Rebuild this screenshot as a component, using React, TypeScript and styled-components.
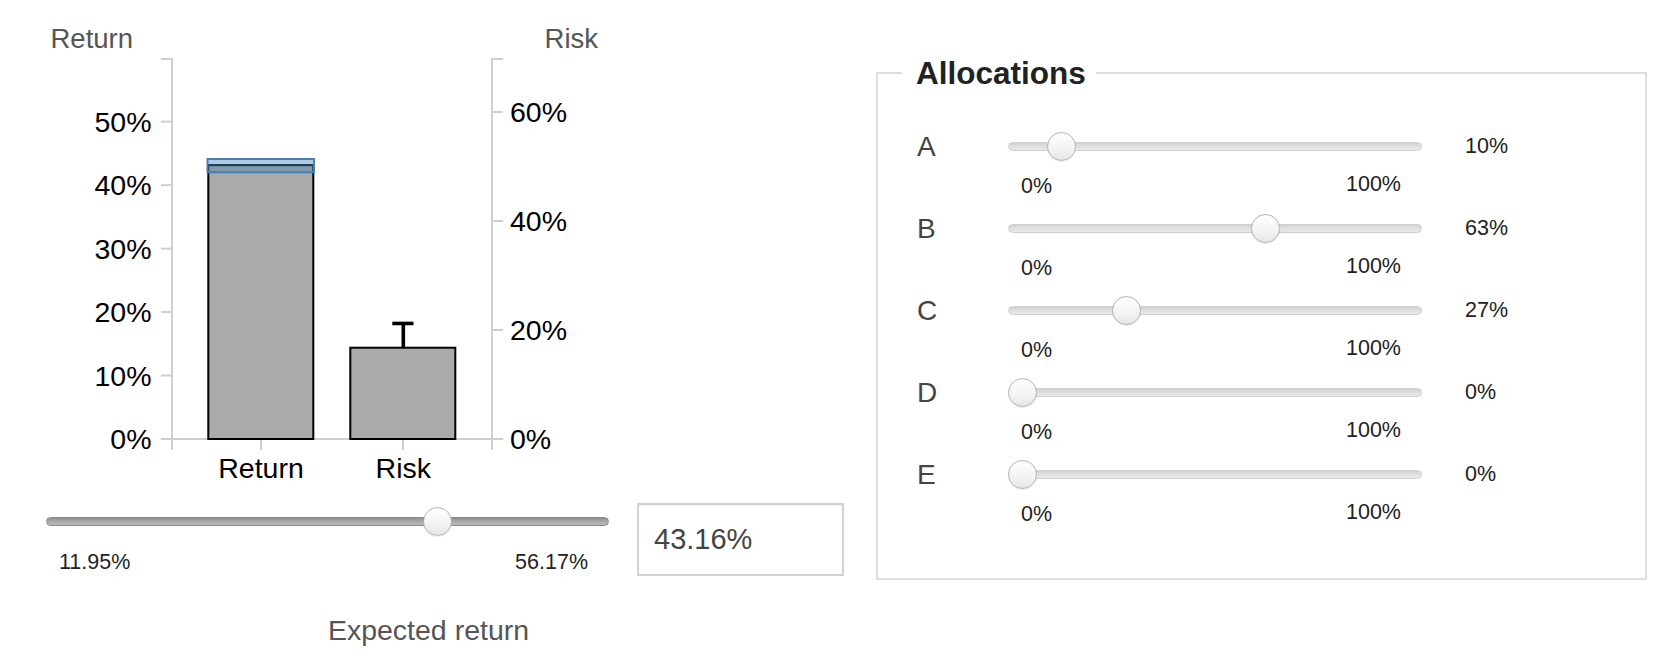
import React from "react";
import styled, { createGlobalStyle, css } from "styled-components";

const GlobalStyle = createGlobalStyle`
  html, body { margin: 0; padding: 0; background: #fff; }
  body { font-family: "Liberation Sans", Arial, Helvetica, sans-serif; color: #222; }
`;

const FONT = `"Liberation Sans", Arial, Helvetica, sans-serif`;

const Page = styled.div`
  display: flex;
  align-items: flex-start;
  gap: 19px;
  width: 1676px;
  height: 658px;
  overflow: hidden;
`;

const LeftColumn = styled.div`
  width: 857px;
  display: flex;
  flex-direction: column;
`;

/* ---------- chart ---------- */
const ChartSvg = styled.svg`
  display: block;
  width: 620px;
  height: 503px;
  font-family: ${FONT};
`;

const AxisPath = styled.path`
  fill: none;
  stroke: #cfcfcf;
  stroke-width: 2px;
`;

const TickLine = styled.line`
  stroke: #cfcfcf;
  stroke-width: 2px;
`;

const TickLabel = styled.text`
  font-size: 28.5px;
  fill: #000;
`;

const AxisTitle = styled.text`
  font-size: 27.5px;
  fill: #555;
`;

const Bar = styled.rect`
  fill: #aaaaaa;
  stroke: #000;
  stroke-width: 2px;
`;

const Band = styled.rect`
  fill: rgba(70, 130, 180, 0.42);
  stroke: #4a7fb3;
  stroke-width: 2px;
`;

const ErrorLine = styled.line`
  stroke: #000;
  stroke-width: 3.6px;
`;

const Y0 = 439;
const yL = (v: number) => Y0 - v * 6.346;
const yR = (v: number) => Y0 - v * 5.45;

const Chart: React.FC = () => {
  const leftTicks = [0, 10, 20, 30, 40, 50];
  const rightTicks = [0, 20, 40, 60];
  const ret = 43.16;
  const risk = 16.75;
  const riskErr = 21.2;
  return (
    <ChartSvg viewBox="0 0 620 503">
      <AxisTitle x={50.5} y={47.5}>Return</AxisTitle>
      <AxisTitle x={598} y={47.5} textAnchor="end">Risk</AxisTitle>

      <AxisPath d="M161,59H172V439H161" />
      <AxisPath d="M503,59H492V439H503" />
      <AxisPath d="M172,450V439H492V450" />

      {leftTicks.map((v) => (
        <g key={`l${v}`}>
          <TickLine x1={161} x2={172} y1={yL(v)} y2={yL(v)} />
          <TickLabel x={151.5} y={yL(v) + 10} textAnchor="end">{v}%</TickLabel>
        </g>
      ))}
      {rightTicks.map((v) => (
        <g key={`r${v}`}>
          <TickLine x1={492} x2={503} y1={yR(v)} y2={yR(v)} />
          <TickLabel x={510} y={yR(v) + 10}>{v}%</TickLabel>
        </g>
      ))}

      <TickLine x1={261} x2={261} y1={439} y2={450} />
      <TickLine x1={403} x2={403} y1={439} y2={450} />

      <Bar x={208.3} y={yL(ret)} width={105} height={Y0 - yL(ret)} />
      <Band x={207.5} y={159} width={106.5} height={13.3} />

      <Bar x={350.3} y={yR(risk)} width={105} height={Y0 - yR(risk)} />
      <ErrorLine x1={403.3} x2={403.3} y1={yR(risk)} y2={yR(riskErr)} />
      <ErrorLine x1={392.3} x2={413.5} y1={yR(riskErr)} y2={yR(riskErr)} />

      <TickLabel x={261} y={477.5} textAnchor="middle">Return</TickLabel>
      <TickLabel x={403.3} y={477.5} textAnchor="middle">Risk</TickLabel>
    </ChartSvg>
  );
};

/* ---------- slider ---------- */
type Variant = "dark" | "light";

const SliderBlock = styled.div<{ $width: number; $offset: number }>`
  width: ${(p) => p.$width}px;
  margin-left: ${(p) => p.$offset}px;
  display: flex;
  flex-direction: column;
`;

const TrackArea = styled.div`
  position: relative;
  height: 29px;
  display: flex;
  align-items: center;
`;

const Track = styled.div<{ $variant: Variant }>`
  width: 100%;
  height: 9px;
  box-sizing: border-box;
  border-radius: 5px;
  ${(p) =>
    p.$variant === "dark"
      ? css`
          background: linear-gradient(#8e8e8e, #a9a9a9 45%, #b9b9b9);
          border: 1px solid #8a8a8a;
        `
      : css`
          background: linear-gradient(#d2d2d2, #dfdfdf 45%, #e8e8e8);
          border: 1px solid #cfcfcf;
        `}
`;

const Thumb = styled.div`
  position: absolute;
  top: 0;
  width: 29px;
  height: 29px;
  box-sizing: border-box;
  border-radius: 50%;
  border: 1.5px solid #b4b4b4;
  background: linear-gradient(#ffffff, #f3f3f3 60%, #e6e6e6);
  box-shadow: 0 1px 1px rgba(0, 0, 0, 0.08);
`;

const RangeLabels = styled.div<{ $gap: number }>`
  margin-top: ${(p) => p.$gap}px;
  display: flex;
  justify-content: space-between;
  padding: 0 21px 0 13px;
  font-size: 21.5px;
  line-height: 24px;
  color: #222;
`;

const MaxLabel = styled.span<{ $lift: number }>`
  position: relative;
  top: -${(p) => p.$lift}px;
`;

interface SliderProps {
  width: number;
  offset?: number;
  fraction: number;
  variant: Variant;
  min: string;
  max: string;
  labelGap: number;
  maxLift?: number;
}

const Slider: React.FC<SliderProps> = ({ width, offset = 0, fraction, variant, min, max, labelGap, maxLift = 0 }) => (
  <SliderBlock $width={width} $offset={offset}>
    <TrackArea>
      <Track $variant={variant} />
      <Thumb style={{ left: `${fraction * (width - 29)}px` }} />
    </TrackArea>
    <RangeLabels $gap={labelGap}>
      <span>{min}</span>
      <MaxLabel $lift={maxLift}>{max}</MaxLabel>
    </RangeLabels>
  </SliderBlock>
);

/* ---------- controls under chart ---------- */
const ControlRow = styled.div`
  display: flex;
  align-items: flex-start;
`;

const SliderSpacer = styled.div`
  padding-top: 4px;
`;

const ValueBox = styled.div`
  margin-left: 28px;
  width: 207px;
  height: 73px;
  box-sizing: border-box;
  border: 2px solid #d2d2d2;
  box-shadow: inset 0 1px 2px rgba(0, 0, 0, 0.07);
  padding-left: 15px;
  display: flex;
  align-items: center;
  font-size: 29px;
  color: #444;
`;

const Caption = styled.div`
  margin-top: 38px;
  text-align: center;
  font-size: 28.5px;
  line-height: 32px;
  color: #555;
`;

/* ---------- allocations ---------- */
const Fieldset = styled.fieldset`
  margin: 56px 0 0 0;
  padding: 0;
  width: 771px;
  box-sizing: border-box;
  border: 2px solid #dedede;
  min-inline-size: auto;
`;

const Legend = styled.legend`
  margin-left: 24px;
  padding: 0 10px 0 14px;
  font-weight: 700;
  font-size: 31.5px;
  line-height: 34px;
  color: #222;
`;

const AllocList = styled.div`
  display: flex;
  flex-direction: column;
  gap: 16px;
  padding: 42px 0 52px 39px;
`;

const AllocRow = styled.div`
  display: grid;
  grid-template-columns: 91px 414px auto;
  align-items: start;
`;

const AllocName = styled.div`
  font-size: 28px;
  line-height: 29px;
  color: #444;
`;

const AllocValue = styled.div`
  margin-left: 43px;
  font-size: 21.5px;
  line-height: 29px;
  color: #222;
`;

const allocations = [
  { name: "A", value: 10 },
  { name: "B", value: 63 },
  { name: "C", value: 27 },
  { name: "D", value: 0 },
  { name: "E", value: 0 },
];

export default function App() {
  const min = 11.95;
  const max = 56.17;
  const current = 43.16;
  return (
    <>
      <GlobalStyle />
      <Page>
        <LeftColumn>
          <Chart />
          <ControlRow>
            <SliderSpacer>
              <Slider
                width={563}
                offset={46}
                fraction={(current - min) / (max - min)}
                variant="dark"
                min={`${min}%`}
                max={`${max}%`}
                labelGap={13.5}
              />
            </SliderSpacer>
            <ValueBox>{current}%</ValueBox>
          </ControlRow>
          <Caption>Expected return</Caption>
        </LeftColumn>

        <Fieldset>
          <Legend>Allocations</Legend>
          <AllocList>
            {allocations.map((a) => (
              <AllocRow key={a.name}>
                <AllocName>{a.name}</AllocName>
                <Slider
                  width={414}
                  fraction={a.value / 100}
                  variant="light"
                  min="0%"
                  max="100%"
                  labelGap={13}
                  maxLift={2}
                />
                <AllocValue>{a.value}%</AllocValue>
              </AllocRow>
            ))}
          </AllocList>
        </Fieldset>
      </Page>
    </>
  );
}
